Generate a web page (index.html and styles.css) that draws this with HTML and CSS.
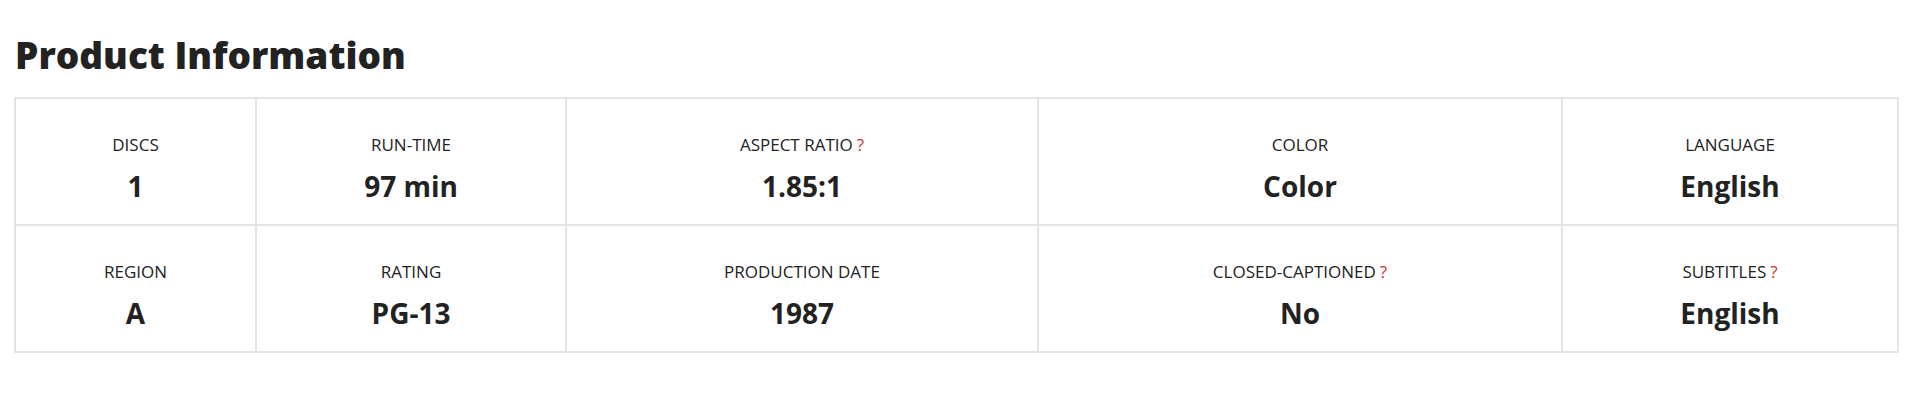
FILE: index.html
```html
<!DOCTYPE html>
<html lang="en">
<head>
<meta charset="utf-8">
<title>Product Information</title>
<link rel="stylesheet" href="styles.css">
</head>
<body>
<section class="product-info">
  <h2 class="product-info__title">Product Information</h2>
  <table class="specs">
    <colgroup>
      <col class="specs__c1">
      <col class="specs__c2">
      <col class="specs__c3">
      <col class="specs__c4">
      <col class="specs__c5">
    </colgroup>
    <tbody>
      <tr>
        <td><div class="specs__label">DISCS</div><div class="specs__value">1</div></td>
        <td><div class="specs__label">RUN-TIME</div><div class="specs__value">97 min</div></td>
        <td><div class="specs__label">ASPECT RATIO<span class="specs__help">?</span></div><div class="specs__value">1.85:1</div></td>
        <td><div class="specs__label">COLOR</div><div class="specs__value">Color</div></td>
        <td><div class="specs__label">LANGUAGE</div><div class="specs__value">English</div></td>
      </tr>
      <tr>
        <td><div class="specs__label">REGION</div><div class="specs__value">A</div></td>
        <td><div class="specs__label">RATING</div><div class="specs__value">PG-13</div></td>
        <td><div class="specs__label">PRODUCTION DATE</div><div class="specs__value">1987</div></td>
        <td><div class="specs__label">CLOSED-CAPTIONED<span class="specs__help">?</span></div><div class="specs__value">No</div></td>
        <td><div class="specs__label">SUBTITLES<span class="specs__help">?</span></div><div class="specs__value">English</div></td>
      </tr>
    </tbody>
  </table>
</section>
</body>
</html>
```
FILE: styles.css
```css
html, body {
  margin: 0;
  padding: 0;
  background: #ffffff;
}

body {
  font-family: "Open Sans", "Liberation Sans", sans-serif;
  color: #222222;
}

.product-info {
  padding: 33px 8px 0 14px;
}

.product-info__title {
  margin: 0 0 20px 1px;
  font-family: "Open Sans", "Liberation Sans", sans-serif;
  font-weight: 800;
  font-size: 37px;
  line-height: 44px;
  color: #222222;
  letter-spacing: 0;
}

.specs {
  width: 1883px;
  table-layout: fixed;
  border-collapse: collapse;
  border: 2px solid #e4e4e4;
}

.specs__c1 { width: 241px; }
.specs__c2 { width: 310px; }
.specs__c3 { width: 472px; }
.specs__c4 { width: 524px; }
.specs__c5 { width: 336px; }

.specs td {
  border: 2px solid #e4e4e4;
  height: 127px;
  padding: 0;
  text-align: center;
  vertical-align: top;
  box-sizing: border-box;
}

.specs__label {
  margin-top: 35px;
  font-size: 17px;
  line-height: 22px;
  color: #222222;
}

.specs__help {
  margin-left: 4px;
  color: #d0312d;
}

.specs__value {
  margin-top: 13px;
  font-size: 28px;
  font-weight: 700;
  line-height: 34px;
  color: #222222;
}
```
